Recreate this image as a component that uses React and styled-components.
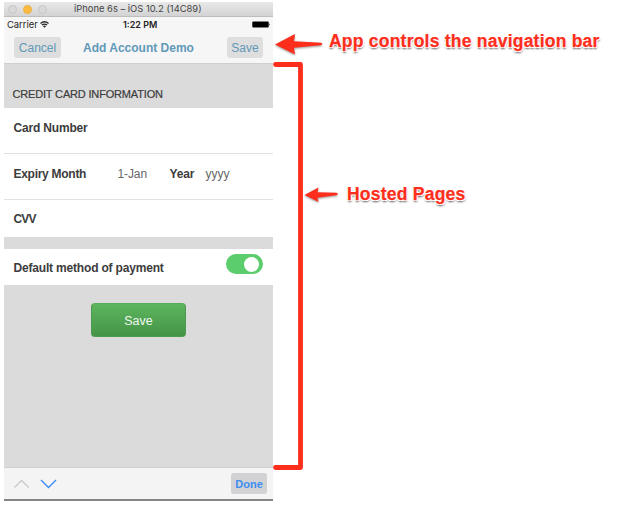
import React from "react";
import styled, { createGlobalStyle } from "styled-components";

const GlobalStyle = createGlobalStyle`
  * { box-sizing: border-box; }
  body { margin: 0; background: #fff; overflow: hidden; }
`;

const Page = styled.main`
  display: flex;
  width: 620px;
  height: 506px;
  padding: 2px 0 5px 4px;
  position: relative;
  font-family: "Liberation Sans", Arial, sans-serif;
  white-space: nowrap;
`;

const Phone = styled.section`
  display: flex;
  flex-direction: column;
  width: 269px;
  height: 499px;
  background: #dbdbdb;
`;

const Text = styled.span`
  color: ${(p) => p.$color || "#3c3c3c"};
  font-family: ${(p) => p.$font || "inherit"};
  font-size: ${(p) => p.$size || 12}px;
  font-weight: ${(p) => p.$weight || 400};
  letter-spacing: ${(p) => p.$track || 0}px;
  line-height: 14px;
`;

const Label = styled(Text)`
  font-size: 12px;
  font-weight: 700;
  letter-spacing: ${(p) => (p.$track === undefined ? -0.18 : p.$track)}px;
`;

const Heading = styled(Text)`
  font-size: 11px;
  letter-spacing: -0.17px;
  -webkit-text-stroke: 0.2px #3c3c3c;
`;

const TitleBar = styled.header`
  display: flex;
  align-items: center;
  height: 15px;
  padding-left: 4px;
  background: linear-gradient(#e8e8e8, #d3d3d3);
  border-bottom: 1px solid #bdbdbd;
`;

const Lights = styled.div`
  display: flex;
  gap: 6px;
  width: 66px;
`;

const Light = styled.i`
  width: 9px;
  height: 9px;
  border-radius: 50%;
  background: ${(p) => (p.$on ? "#fdbc40" : "#d9d9d9")};
  border: 1px solid ${(p) => (p.$on ? "#eeb03f" : "#c6c6c6")};
`;

const StatusBar = styled.div`
  display: grid;
  grid-template-columns: 116px 1fr auto;
  align-items: center;
  height: 15px;
  padding: 0 2px 0 3px;
  background: #f6f6f6;
`;

const Carrier = styled.div`
  display: flex;
  align-items: center;
  gap: 2px;
`;

const NavBar = styled.nav`
  display: grid;
  grid-template-columns: 69px 1fr auto;
  align-items: center;
  height: 32px;
  padding: 0 10px;
  background: #f6f6f6;
  border-bottom: 1px solid #cfcfcf;
`;

const BarButton = styled.button`
  display: flex;
  align-items: center;
  justify-content: center;
  width: ${(p) => p.$width}px;
  height: 21px;
  padding: 0;
  border: 0;
  border-radius: 3px;
  background: ${(p) => p.$bg || "#dedede"};
`;

const SectionTitle = styled.div`
  height: 44px;
  padding: 23px 0 0 8.5px;
  display: flex;
`;

const Row = styled.div`
  display: flex;
  align-items: flex-start;
  height: ${(p) => p.$height}px;
  padding: ${(p) => p.$top}px 10px 0 9.5px;
  background: #fff;
  border-bottom: ${(p) => (p.$line ? "1px solid #e2e2e2" : "0")};
`;

const Cell = styled.div`
  display: flex;
  width: ${(p) => p.$width}px;
`;

const Gap = styled.div`
  height: 12px;
`;

const Toggle = styled.div`
  display: flex;
  justify-content: flex-end;
  width: 37px;
  height: 20px;
  margin: -7px 0 0 auto;
  padding: 2.5px 4.5px;
  border-radius: 10px;
  background: #5bcd6c;
`;

const Knob = styled.i`
  width: 15px;
  height: 15px;
  border-radius: 50%;
  background: #fff;
`;

const Body = styled.div`
  flex: 1;
  padding: 18px 0 0 87px;
`;

const SaveButton = styled.button`
  display: flex;
  align-items: center;
  justify-content: center;
  width: 95px;
  height: 34px;
  padding: 2px 0 0;
  border: 1px solid #4d9b50;
  border-top-color: #58ad59;
  border-radius: 4px;
  background: linear-gradient(#5db55e, #459447);
`;

const Accessory = styled.footer`
  display: flex;
  align-items: center;
  justify-content: space-between;
  height: 34px;
  padding: 0 6px 0 10px;
  background: #f4f4f4;
  border-top: 1px solid #cfcfcf;
  border-bottom: 2px solid #858585;
`;

const Overlay = styled.svg`
  position: absolute;
  left: 273px;
  top: 0;
`;

const Note = styled.div`
  position: absolute;
  left: ${(p) => p.$left}px;
  top: ${(p) => p.$top}px;
  color: #fe2e1c;
  font-size: 17.5px;
  font-weight: 700;
  line-height: 20px;
  letter-spacing: 0.23px;
  text-shadow: 1px 0 #fff, -1px 0 #fff, 0 1px #fff, 0 -1px #fff,
    1px 1px #fff, -1px 1px #fff, 0 2px 2px rgba(0, 0, 0, 0.5),
    1px 2px 2px rgba(0, 0, 0, 0.2);
  -webkit-text-stroke: 0.25px #fe2e1c;
`;

const BLUE = "#6199b9";

export default function App() {
  return (
    <Page>
      <GlobalStyle />
      <Phone>
        <TitleBar>
          <Lights><Light /><Light $on /><Light /></Lights>
          <Text $font="Inter" $size={9.4} $color="#444">iPhone 6s – iOS 10.2 (14C89)</Text>
        </TitleBar>
        <StatusBar>
          <Carrier>
            <Text $font="Inter" $size={9.4} $color="#222">Carrier</Text>
            <svg width="9" height="7" viewBox="0 0 9 7" fill="none" stroke="#222" strokeWidth="1.3">
              <path d="M.5 2.4Q4.5-.9 8.5 2.4M1.9 4.1Q4.5 2 7.1 4.1" />
              <path d="M4.5 6.8 3 5.2Q4.5 4 6 5.2Z" fill="#222" stroke="none" />
            </svg>
          </Carrier>
          <Text $font="Inter" $size={9} $weight={600} $color="#222">1:22 PM</Text>
          <svg width="19" height="7" viewBox="0 0 19 7">
            <rect x="0.3" y="0.4" width="16.4" height="6.2" rx="1" />
            <path d="M17.2 2.2Q18.6 3.5 17.2 4.8Z" />
          </svg>
        </StatusBar>
        <NavBar>
          <BarButton $width={47}><Text $color={BLUE}>Cancel</Text></BarButton>
          <Text $color={BLUE} $weight={700}>Add Account Demo</Text>
          <BarButton $width={36}><Text $color={BLUE}>Save</Text></BarButton>
        </NavBar>
        <SectionTitle><Heading>CREDIT CARD INFORMATION</Heading></SectionTitle>
        <Row $height={46} $top={13} $line><Label>Card Number</Label></Row>
        <Row $height={46} $top={13} $line>
          <Cell $width={104}><Label $track={-0.28}>Expiry Month</Label></Cell>
          <Cell $width={52}><Text $color="#666" $track={-0.1}>1-Jan</Text></Cell>
          <Cell $width={36}><Label>Year</Label></Cell>
          <Text $color="#666">yyyy</Text>
        </Row>
        <Row $height={37} $top={12}><Label $track={-0.8}>CVV</Label></Row>
        <Gap />
        <Row $height={36} $top={12}>
          <Label>Default method of payment</Label>
          <Toggle><Knob /></Toggle>
        </Row>
        <Body>
          <SaveButton><Text $color="#f1f8f1" $size={12.5}>Save</Text></SaveButton>
        </Body>
        <Accessory>
          <svg width="44" height="12" viewBox="0 0 44 12" fill="none" strokeWidth="1.4">
            <path d="M.5 9.5 7.5 2.5l7.3 7" stroke="#cbcbcb" />
            <path d="m27 2 7.5 7.5 7.5-7.5" stroke="#3b8df5" />
          </svg>
          <BarButton $width={36} $bg="#d2d2d5"><Text $color="#3b8df0" $weight={700} $size={11}>Done</Text></BarButton>
        </Accessory>
      </Phone>
      <Overlay width="80" height="506" viewBox="273 0 80 506">
        <path d="M275.5 64.5H300.5V467.5H275.5" fill="none" stroke="#fe2e1c" strokeWidth="4.8" strokeLinecap="round" strokeLinejoin="round" />
        <g fill="#fe2e1c" filter="drop-shadow(0 1.5px 1px rgba(0,0,0,.4))">
          <path d="M275 44.5 295 34 294 41.3 321 42.8Q323.500 44 321 45.2L294 47.700 295 54.500Z" />
          <path d="M304.500 195 318.500 187.500 317.500 192.300 336.500 192.800Q339 194 336.500 195.200L317.500 197.700 318.500 202Z" />
        </g>
      </Overlay>
      <Note $left={329} $top={31}>App controls the navigation bar</Note>
      <Note $left={347} $top={184}>Hosted Pages</Note>
    </Page>
  );
}
